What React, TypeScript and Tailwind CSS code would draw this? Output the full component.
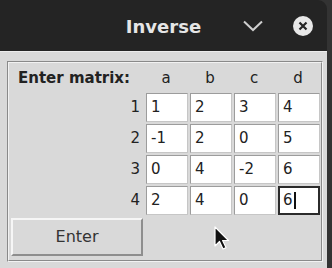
const cols = ['a', 'b', 'c', 'd']
const rows = [
  ['1', '2', '3', '4'],
  ['-1', '2', '0', '5'],
  ['0', '4', '-2', '6'],
  ['2', '4', '0', '6'],
]

function Cell({ value, focused }: { value: string; focused?: boolean }) {
  if (focused) {
    return (
      <div className="w-[42px] h-[29px] bg-white border-2 border-[#2b2b2b] flex items-center pl-[3px]">
        <span>{value}</span>
        <span className="w-[2px] h-[17px] bg-[#111] ml-[1px]" />
      </div>
    )
  }
  return (
    <div className="w-[42px] h-[29px] bg-white border border-t-[#9c9c9c] border-l-[#9c9c9c] border-b-[#c6c6c6] border-r-[#c6c6c6] flex items-center pl-[4px]">
      {value}
    </div>
  )
}

export default function App() {
  return (
    <div className="w-[332px] h-[268px] bg-[#333333] overflow-hidden flex font-['DejaVu_Sans',sans-serif] text-[15px] text-[#222]">
      <div className="w-[327px] flex flex-col">
        {/* Title bar */}
        <div className="h-[51px] bg-[#242424] rounded-tr-[9px] grid grid-cols-[1fr_auto_1fr] items-center">
          <div />
          <div className="text-[18px] font-bold text-[#e6e6e6] pt-[2px]">Inverse</div>
          <div className="flex items-center justify-end gap-[30px] pr-[14px]">
            <svg width="20" height="12" viewBox="0 0 20 12" className="mt-[1px]">
              <path d="M1 1.5 L10 10 L19 1.5" fill="none" stroke="#cfcfcf" strokeWidth="2" />
            </svg>
            <svg width="20" height="20" viewBox="0 0 20 20">
              <circle cx="10" cy="10" r="10" fill="#e8e8e8" />
              <path d="M6.5 6.5 L13.5 13.5 M13.5 6.5 L6.5 13.5" stroke="#242424" strokeWidth="2.2" />
            </svg>
          </div>
        </div>

        {/* Body */}
        <div className="flex-1 bg-[#d9d9d9] border-t border-[#ececec] pt-[9px] pl-[7px] relative">
          {/* groove frame */}
          <div className="w-[316px] h-[201px] border border-t-[#8a8a8a] border-l-[#8a8a8a] border-b-[#f2f2f2] border-r-[#f2f2f2]">
            <div className="w-full h-full border border-t-[#f2f2f2] border-l-[#f2f2f2] border-b-[#8a8a8a] border-r-[#8a8a8a] pl-[2px] flex flex-col">
              {/* header row */}
              <div className="h-[30px] flex items-center">
                <div className="w-[133px] pl-[7px] font-bold">Enter matrix:</div>
                <div className="flex gap-[2px] ml-[2px]">
                  {cols.map((c) => (
                    <div key={c} className="w-[42px] text-center pr-[2px]">
                      {c}
                    </div>
                  ))}
                </div>
              </div>
              {/* matrix rows */}
              <div className="flex flex-col gap-[2px]">
                {rows.map((r, i) => (
                  <div key={i} className="flex items-center">
                    <div className="w-[133px] text-right pr-[4px]">{i + 1}</div>
                    <div className="flex gap-[2px] ml-[2px]">
                      {r.map((v, j) => (
                        <Cell key={j} value={v} focused={i === 3 && j === 3} />
                      ))}
                    </div>
                  </div>
                ))}
              </div>
              {/* button */}
              <button className="mt-[3px] w-[132px] h-[38px] bg-[#d9d9d9] border-2 border-t-[#f6f6f6] border-l-[#f6f6f6] border-b-[#8e8e8e] border-r-[#8e8e8e] text-[#333] text-[16px] flex items-center justify-center">
                Enter
              </button>
            </div>
          </div>

          {/* mouse pointer */}
          <svg
            width="18"
            height="26"
            viewBox="0 0 18 26"
            className="absolute left-[213px] top-[174px]"
          >
            <path
              d="M2 1 L2 20 L6.5 15.5 L10 23 L13 21.6 L9.6 14.5 L15.5 14.5 Z"
              fill="#111"
              stroke="#fff"
              strokeWidth="1.2"
              strokeLinejoin="round"
            />
          </svg>
        </div>
      </div>
    </div>
  )
}
